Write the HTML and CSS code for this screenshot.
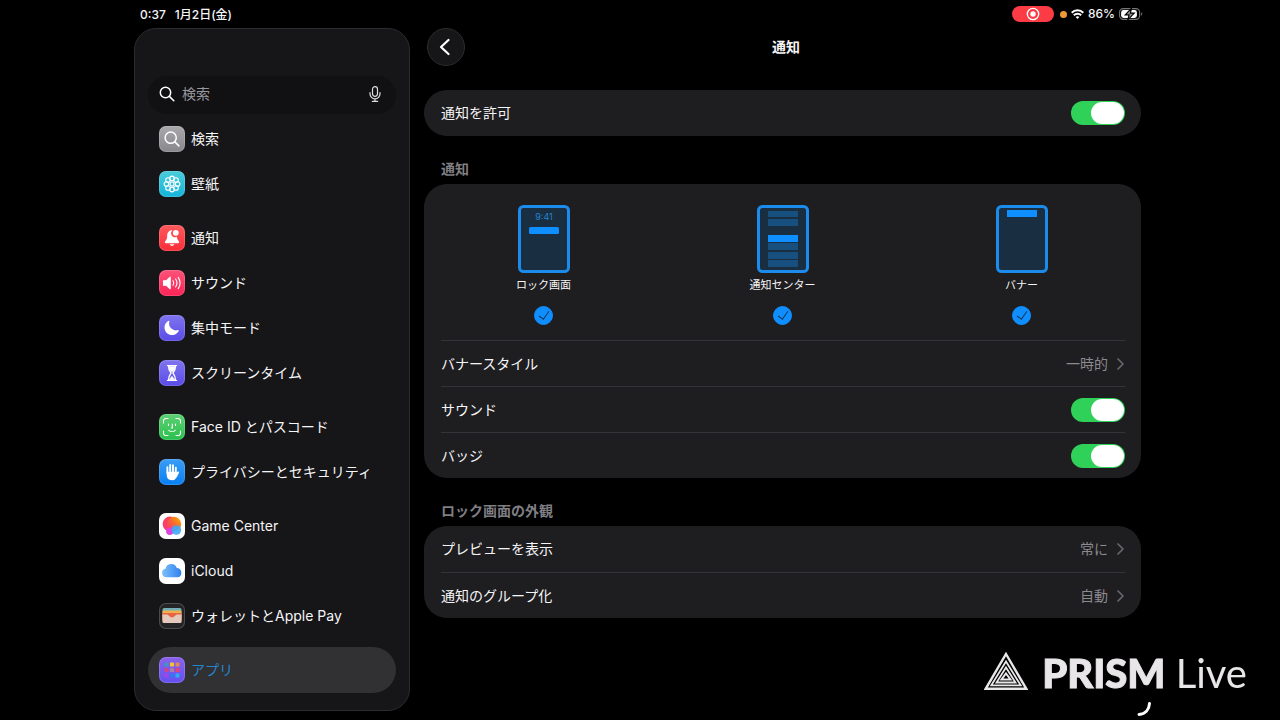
FILE: index.html
```html
<!DOCTYPE html>
<html lang="ja">
<head>
  <meta charset="UTF-8" />
  <meta name="viewport" content="width=device-width, initial-scale=1.0"/>
  <title>設定 - 通知</title>
  <link rel="stylesheet" href="styles.css">
</head>
<body>
  <div class="screen">
    <header class="status-bar">
      <div class="status-left">
        <span>0:37</span>
        <span>1月2日(金)</span>
      </div>
      <div class="status-right">
        <span class="record-pill">
          <svg width="14" height="14" viewBox="0 0 14 14"><circle cx="7" cy="7" r="5.7" fill="none" stroke="#fff" stroke-width="1.3"/><circle cx="7" cy="7" r="2.7" fill="#fff"/></svg>
        </span>
        <span class="mic-dot"></span>
        <svg class="wifi" width="13" height="10" viewBox="0 0 13 10" fill="none" stroke="#fff" stroke-width="2">
          <path d="M.7 3.700a8.200 8.200 0 0 1 11.600 0"/>
          <path d="M2.800 6.300a5.200 5.200 0 0 1 7.400 0"/>
          <path d="M6.500 10 4.600 8.100a2.700 2.700 0 0 1 3.800 0z" fill="#fff" stroke="none"/>
        </svg>
        <span class="percent">86%</span>
        <svg width="24" height="12" viewBox="0 0 24 12">
          <rect x=".6" y=".6" width="20" height="10.8" rx="3.6" fill="none" stroke="#77777b" stroke-width="1.1"/>
          <path d="M22.2 4.2a2 2 0 0 1 0 3.6z" fill="#77777b"/>
          <path d="M4.500 2h11a2.400 2.400 0 0 1 2.400 2.400v3.200a2.400 2.400 0 0 1-2.400 2.400h-11a2.400 2.400 0 0 1-2.400-2.400V4.400A2.400 2.400 0 0 1 4.500 2z" fill="#fff"/>
          <path d="M12.500.2 6.300 6.800h3.800L8.800 11.800l6.400-6.700h-3.800z" fill="#9a9a9e" stroke="#000" stroke-width="1.200"/>
        </svg>
      </div>
    </header>

    <div class="settings">
      <nav class="sidebar">
        <div class="search">
          <svg width="16" height="16" viewBox="0 0 16 16" fill="none" stroke="#fff" stroke-width="1.5" stroke-linecap="round"><circle cx="6.500" cy="6.500" r="5.200"/><path d="m10.400 10.400 4.400 4.400"/></svg>
          <input type="search" placeholder="検索" aria-label="検索">
          <button class="mic" type="button" aria-label="音声入力">
            <svg width="12" height="16" viewBox="0 0 12 16" fill="none" stroke="#ddd" stroke-width="1.200" stroke-linecap="round"><rect x="3.500" y=".7" width="5" height="9.600" rx="2.500"/><path d="M1 6.500v1.300a5 5 0 0 0 10 0V6.500M6 12.800v2.400M3.300 15.300h5.400"/></svg>
          </button>
        </div>

        <ul class="menu">
          <li><a class="item" href="#">
            <span class="icon icon-search"><svg viewBox="0 0 26 26" fill="none" stroke="#fff" stroke-width="1.500" stroke-linecap="round"><circle cx="11.700" cy="11.700" r="5.600"/><path d="m15.900 15.900 4 4"/></svg></span>
            検索</a></li>
          <li><a class="item" href="#">
            <span class="icon icon-wallpaper"><svg viewBox="0 0 26 26" fill="none" stroke="#fff" stroke-width="1.100">
              <circle cx="13" cy="13" r="2"/>
              <circle cx="13" cy="7.400" r="2.300"/><circle cx="17" cy="9" r="2.300"/><circle cx="18.600" cy="13" r="2.300"/><circle cx="17" cy="17" r="2.300"/>
              <circle cx="13" cy="18.600" r="2.300"/><circle cx="9" cy="17" r="2.300"/><circle cx="7.400" cy="13" r="2.300"/><circle cx="9" cy="9" r="2.300"/></svg></span>
            壁紙</a></li>
        </ul>

        <ul class="menu">
          <li><a class="item" href="#">
            <span class="icon icon-notice"><svg viewBox="0 0 26 26" fill="#fff"><path d="M13.500 5.200c-3.700-.1-5.300 2.600-5.300 5.200 0 3.600-.9 4.600-2.100 5.900-.6.700-.3 1.900.8 1.900h12.200c1.100 0 1.400-1.200.8-1.900-1-1.100-1.800-2.100-2-4.500a4 4 0 0 1-4.400-6.600z"/><circle cx="16.800" cy="7.800" r="2.900"/><path d="M10.700 19.200h4.600a2.400 2.400 0 0 1-4.600 0z"/></svg></span>
            通知</a></li>
          <li><a class="item" href="#">
            <span class="icon icon-sound"><svg viewBox="0 0 26 26" fill="none" stroke="#fff" stroke-width="1.100" stroke-linecap="round"><path d="M4.500 10.800h2.700l4-3.600v11.600l-4-3.600H4.500z" fill="#fff" stroke-linejoin="round"/><path d="M14 10.700a4 4 0 0 1 0 4.600M16.600 9a7 7 0 0 1 0 8M19.200 7.400a10 10 0 0 1 0 11.200"/></svg></span>
            サウンド</a></li>
          <li><a class="item" href="#">
            <span class="icon icon-focus"><svg viewBox="0 0 26 26" fill="#fff"><path d="M10.400 6.300a.5.500 0 0 0-.7-.5 7.500 7.500 0 1 0 10.100 9.900.5.500 0 0 0-.7-.6A7 7 0 0 1 10.400 6.300z"/></svg></span>
            集中モード</a></li>
          <li><a class="item" href="#">
            <span class="icon icon-time"><svg viewBox="0 0 26 26" fill="none" stroke="#fff" stroke-width="1.400" stroke-linecap="round" stroke-linejoin="round"><path d="M8.500 5.600h9M8.500 20.400h9M9.500 5.800c0 4 .7 4.700 2.600 7.200-1.900 2.500-2.600 3.200-2.600 7.200h7c0-4-.7-4.700-2.600-7.200 1.900-2.500 2.600-3.200 2.600-7.200"/><path d="M10 6.500h6l-.7 3L13 12l-2.300-2.500zM13 16.300l2.500 3.300h-5z" fill="#fff" stroke-width=".5"/></svg></span>
            スクリーンタイム</a></li>
        </ul>

        <ul class="menu">
          <li><a class="item" href="#">
            <span class="icon icon-face"><svg viewBox="0 0 26 26" fill="none" stroke="#fff" stroke-width="1.100" stroke-linecap="round"><path d="M4.500 9V7a2.500 2.500 0 0 1 2.500-2.500h2M17 4.500h2A2.500 2.500 0 0 1 21.500 7v2M21.500 17v2a2.500 2.500 0 0 1-2.500 2.500h-2M9 21.500H7A2.500 2.500 0 0 1 4.500 19v-2M9.500 10v1.500M16.500 10v1.500M13.300 10v4h-.9M9.800 16.300a4.700 4.700 0 0 0 6.400 0"/></svg></span>
            Face ID とパスコード</a></li>
          <li><a class="item" href="#">
            <span class="icon icon-privacy"><svg viewBox="0 0 26 26" fill="none" stroke="#fff" stroke-width="1.900" stroke-linecap="round" stroke-linejoin="round"><path d="M8.400 14V8.300M11.200 13V6M14 13V6.200M16.800 14V8.600"/><path d="M8.400 13.500h8.400v2.300l2.300-2.700c.3.300.2.700 0 1l-2.200 4c-.8 1.500-2 2.400-3.800 2.400-2.900 0-4.700-1.700-4.700-4.500z" fill="#fff" stroke-width="1.400"/></svg></span>
            プライバシーとセキュリティ</a></li>
        </ul>

        <ul class="menu">
          <li><a class="item" href="#">
            <span class="icon icon-game"><svg viewBox="0 0 26 26">
              <defs>
                <linearGradient id="warm" x1="1" y1="0" x2="0" y2="1"><stop offset="0" stop-color="#ffb400"/><stop offset=".5" stop-color="#f9652f"/><stop offset="1" stop-color="#f5318c"/></linearGradient>
              </defs>
              <circle cx="11" cy="11" r="7.400" fill="#fa3f68"/><circle cx="15" cy="11" r="7.200" fill="url(#warm)"/><circle cx="10.800" cy="18.300" r="3.700" fill="#dc45dd"/><circle cx="17.400" cy="17" r="4.800" fill="#3fa9f8" opacity=".9"/></svg></span>
            Game Center</a></li>
          <li><a class="item" href="#">
            <span class="icon icon-cloud"><svg viewBox="0 0 26 26">
              <defs><linearGradient id="cloud" x1="0" y1="0" x2="1" y2="0"><stop offset="0" stop-color="#7cc0fb"/><stop offset="1" stop-color="#2f80ee"/></linearGradient></defs>
              <path d="M7.200 19.300a4.300 4.300 0 0 1-.7-8.500 5.900 5.900 0 0 1 11.300-.9 4.800 4.800 0 0 1 1.100 9.400z" fill="url(#cloud)"/></svg></span>
            iCloud</a></li>
          <li><a class="item" href="#">
            <span class="icon icon-wallet"><svg viewBox="0 0 26 26">
              <rect x="3.500" y="5" width="19" height="10" rx="1.500" fill="#72aeb4"/><rect x="3.500" y="7.500" width="19" height="10" rx="1" fill="#efb14c"/><rect x="3.500" y="10" width="19" height="9.500" rx="1" fill="#e86343"/>
              <path d="M3.500 11.500h4.500c1.600 0 2.500 3 5 3s3.400-3 5-3h4.500v7a1.500 1.500 0 0 1-1.500 1.500H5a1.500 1.500 0 0 1-1.500-1.500z" fill="#e4cabd"/></svg></span>
            ウォレットとApple Pay</a></li>
        </ul>

        <ul class="menu">
          <li><a class="item active" href="#" aria-current="page">
            <span class="icon icon-apps"><svg viewBox="0 0 26 26">
              <rect x="5.500" y="5.500" width="4" height="4" rx=".6" fill="#3d98b5"/><rect x="11" y="5.500" width="4" height="4" rx=".6" fill="#f4c33c"/><rect x="16.500" y="5.500" width="4" height="4" rx=".6" fill="#dd8e51"/>
              <rect x="5.500" y="11" width="4" height="4" rx=".6" fill="#cf438d"/><rect x="11" y="11" width="4" height="4" rx=".6" fill="#ac7ca6"/><rect x="16.500" y="11" width="4" height="4" rx=".6" fill="#e64279"/>
              <rect x="5.500" y="16.500" width="4" height="4" rx=".6" fill="#a344e5"/><rect x="11" y="16.500" width="4" height="4" rx=".6" fill="#2a7bf2"/><rect x="16.500" y="16.500" width="4" height="4" rx=".6" fill="#28b0ee"/></svg></span>
            アプリ</a></li>
        </ul>
      </nav>

      <main class="panel">
        <div class="panel-header">
          <button class="back" type="button" aria-label="戻る">
            <svg width="12" height="18" viewBox="0 0 12 18" fill="none" stroke="#fff" stroke-width="2.200" stroke-linecap="round" stroke-linejoin="round"><path d="M9.500 2 2 9l7.500 7"/></svg>
          </button>
          <h1>通知</h1>
        </div>

        <section class="card">
          <label class="row">通知を許可 <input class="switch" type="checkbox" role="switch" checked></label>
        </section>

        <h2>通知</h2>
        <section class="card">
          <div class="options">
            <label class="option">
              <svg width="52" height="68" viewBox="0 0 52 68">
                <rect class="device" x="1.500" y="1.500" width="49" height="65" rx="4"/>
                <text class="clock" x="26" y="15" text-anchor="middle">9:41</text>
                <rect class="bar" x="11" y="22" width="30" height="7" rx="1.500"/>
              </svg>
              <span>ロック画面</span>
              <input class="check" type="checkbox" checked>
            </label>
            <label class="option">
              <svg width="52" height="68" viewBox="0 0 52 68">
                <rect class="device" x="1.500" y="1.500" width="49" height="65" rx="4"/>
                <rect class="bar dim" x="11" y="6" width="30" height="6"/>
                <rect class="bar dim" x="11" y="14" width="30" height="7"/>
                <rect class="bar" x="11" y="30" width="30" height="7"/>
                <rect class="bar dim" x="11" y="38" width="30" height="7"/>
                <rect class="bar dim" x="11" y="47" width="30" height="7"/>
                <rect class="bar dim" x="11" y="55" width="30" height="7"/>
              </svg>
              <span>通知センター</span>
              <input class="check" type="checkbox" checked>
            </label>
            <label class="option">
              <svg width="52" height="68" viewBox="0 0 52 68">
                <rect class="device" x="1.500" y="1.500" width="49" height="65" rx="4"/>
                <rect class="bar" x="11" y="5" width="30" height="7"/>
              </svg>
              <span>バナー</span>
              <input class="check" type="checkbox" checked>
            </label>
          </div>
          <a class="row" href="#">バナースタイル
            <span class="value">一時的 <svg width="8" height="12" viewBox="0 0 8 12"><path d="m1 1 5 5-5 5"/></svg></span></a>
          <label class="row">サウンド <input class="switch" type="checkbox" role="switch" checked></label>
          <label class="row">バッジ <input class="switch" type="checkbox" role="switch" checked></label>
        </section>

        <h2>ロック画面の外観</h2>
        <section class="card">
          <a class="row" href="#">プレビューを表示
            <span class="value">常に <svg width="8" height="12" viewBox="0 0 8 12"><path d="m1 1 5 5-5 5"/></svg></span></a>
          <a class="row" href="#">通知のグループ化
            <span class="value">自動 <svg width="8" height="12" viewBox="0 0 8 12"><path d="m1 1 5 5-5 5"/></svg></span></a>
        </section>
      </main>
    </div>
  </div>

  <!-- stream overlay -->
  <div class="watermark">
    <svg width="44" height="38" viewBox="0 0 44 38" fill="none" stroke="#e8e6e8">
      <path d="M22 2 42.300 36.800H1.700z" stroke-width="2.400"/>
      <path d="M22 9.500 36.700 33.300H7.300z" stroke-width="1.800"/>
      <path d="M22 15.500 31.500 30.500H12.500z" stroke-width="1.800"/>
      <path d="M22 21.500 26.500 27.500h-9z" stroke-width="2"/>
    </svg>
    <span><strong>PRISM</strong> Live</span>
  </div>
  <svg class="spinner" width="16" height="16" viewBox="0 0 16 16"><path d="M13.500 2.500C13.200 8.500 9.500 13 3 13.500" fill="none" stroke="#fff" stroke-width="3" stroke-linecap="round"/></svg>
</body>
</html>
```

FILE: styles.css
```css
:root {
  --bg: #000;
  --sidebar: #161518;
  --card: #1e1d20;
  --line: #343337;
  --text: #f5f5f7;
  --muted: #8b8a8f;
  --blue: #0f8fff;
  --green: #30d158;
}

* {
  box-sizing: border-box;
}

body {
  margin: 0;
  font-family: Inter, "Noto Sans CJK JP", sans-serif;
  font-size: 14px;
  line-height: 20px;
  background: var(--bg);
  color: var(--text);
}

a {
  color: inherit;
  text-decoration: none;
}

button {
  padding: 0;
  border: none;
  background: none;
  cursor: pointer;
}

svg {
  display: block;
  flex: none;
}

.screen {
  display: flex;
  flex-direction: column;
  min-height: 100vh;
  padding: 0 139px 9px 134px;
}

/* status bar */
.status-bar {
  display: flex;
  justify-content: space-between;
  align-items: center;
  height: 28px;
  padding-left: 6px;
  font-size: 12px;
  font-weight: 500;
}

.status-left,
.status-right {
  display: flex;
  align-items: center;
}

.status-left {
  gap: 9px;
  padding-top: 1px;
}

.status-right {
  gap: 4px;
  margin-right: -2px;
}

.record-pill {
  display: flex;
  align-items: center;
  justify-content: center;
  width: 42px;
  height: 16px;
  margin-right: 2px;
  border-radius: 8px;
  background: #fb3c44;
}

.mic-dot {
  width: 7px;
  height: 7px;
  border-radius: 50%;
  background: #f09a37;
}

.settings {
  display: flex;
  flex: 1;
  gap: 14px;
}

/* sidebar */
.sidebar {
  flex: none;
  width: 276px;
  padding: 47px 13px 17px;
  border: 1px solid #2c2b2e;
  border-radius: 22px;
  background: var(--sidebar);
}

.search {
  display: flex;
  align-items: center;
  gap: 7px;
  height: 38px;
  margin-bottom: 2px;
  padding: 0 15px 2px 11px;
  border-radius: 20px;
  background: #111013;
}

.search input {
  flex: 1;
  min-width: 0;
  padding: 0;
  border: none;
  outline: none;
  background: none;
  color: var(--text);
  font: inherit;
}

.search input::placeholder {
  color: #98979b;
}

.menu {
  margin: 0;
  padding: 0;
  list-style: none;
}

.menu + .menu {
  margin-top: 9px;
}

.item {
  display: flex;
  align-items: center;
  gap: 6px;
  height: 45px;
  padding: 0 11px;
  border-radius: 23px;
}

.item.active {
  height: 46px;
  background: #313033;
  color: #2486cc;
}

.icon {
  flex: none;
  width: 26px;
  height: 26px;
  border-radius: 7px;
  box-shadow: inset 0 0 0 1px rgba(255, 255, 255, 0.15);
}

.icon-search { background: linear-gradient(#a9a8ad, #88878c); }
.icon-wallpaper { background: linear-gradient(#4accd9, #14b5dc); }
.icon-notice { background: linear-gradient(#ff5a5c, #f92e39); }
.icon-sound { background: linear-gradient(#fb5379, #fb2457); }
.icon-focus { background: linear-gradient(#8075ef, #5a4be6); }
.icon-time { background: linear-gradient(#8075ef, #5a4be6); }
.icon-face { background: linear-gradient(#5ed074, #2bc04e); }
.icon-privacy { background: linear-gradient(#3c9df5, #077ff2); }
.icon-game,
.icon-cloud { background: #fff; }
.icon-wallet { background: #242326; box-shadow: inset 0 0 0 1px #4b4a4d; }
.icon-apps { background: linear-gradient(#8a62e9, #654ff0); }

/* main panel */
.panel {
  flex: 1;
  min-width: 0;
}

.panel-header {
  display: grid;
  grid-template-columns: 38px 1fr 34px;
  align-items: center;
  margin-bottom: 24px;
  padding-left: 3px;
}

.back {
  display: flex;
  align-items: center;
  justify-content: center;
  width: 38px;
  height: 38px;
  padding-right: 2px;
  border: 1px solid #2c2b2e;
  border-radius: 50%;
  background: #161518;
}

h1 {
  margin: 0;
  font-size: 14px;
  font-weight: 700;
  text-align: center;
}

h2 {
  margin: 0;
  padding: 23px 17px 5px;
  font-size: 14px;
  font-weight: 600;
  color: #7f7e83;
}

.card {
  border-radius: 23px;
  background: var(--card);
}

.row {
  display: flex;
  align-items: center;
  justify-content: space-between;
  height: 46px;
  margin: 0 16px 0 17px;
}

.options + .row,
.row + .row {
  border-top: 1px solid var(--line);
}

.value {
  display: flex;
  align-items: center;
  gap: 9px;
  color: var(--muted);
}

.value svg {
  fill: none;
  stroke: #68676c;
  stroke-width: 1.7;
  stroke-linecap: round;
  stroke-linejoin: round;
}

.switch {
  appearance: none;
  display: flex;
  align-items: center;
  width: 54px;
  height: 24px;
  margin: 0;
  padding: 0 1px;
  border-radius: 12px;
  background: #3a393d;
  cursor: pointer;
}

.switch::before {
  content: "";
  width: 33px;
  height: 22px;
  border-radius: 11px;
  background: #fff;
}

.switch:checked {
  justify-content: flex-end;
  background: var(--green);
}

.options {
  display: grid;
  grid-template-columns: repeat(3, 1fr);
  padding: 21px 0 15px;
}

.option {
  display: flex;
  flex-direction: column;
  align-items: center;
  font-size: 11px;
  line-height: 16px;
}

.option span {
  margin: 4px 0 13px;
}

.device {
  fill: #1a2e42;
  stroke: #1b8cec;
  stroke-width: 3;
}

.bar {
  fill: var(--blue);
}

.bar.dim {
  fill: #17507f;
}

.clock {
  fill: #2584cf;
  font-size: 9px;
}

.check {
  appearance: none;
  display: flex;
  align-items: center;
  justify-content: center;
  width: 19px;
  height: 19px;
  margin: 0;
  border: 1px solid var(--muted);
  border-radius: 50%;
}

.check:checked {
  border-color: var(--blue);
  background: var(--blue);
}

.check:checked::before {
  content: "";
  width: 5px;
  height: 9px;
  margin-bottom: 3px;
  border: solid #16324d;
  border-width: 0 1px 1px 0;
  transform: rotate(35deg);
}

/* overlay */
.watermark {
  position: fixed;
  right: 33px;
  bottom: 23px;
  display: flex;
  align-items: center;
  gap: 14px;
  font-family: Lato, sans-serif;
  font-size: 40px;
  line-height: 48px;
  color: #e8e6e8;
}

.watermark svg {
  margin-bottom: 4px;
}

.watermark strong {
  font-weight: 900;
  -webkit-text-stroke: 1px #e8e6e8;
}

.spinner {
  position: fixed;
  right: 128px;
  bottom: 3px;
}
```
